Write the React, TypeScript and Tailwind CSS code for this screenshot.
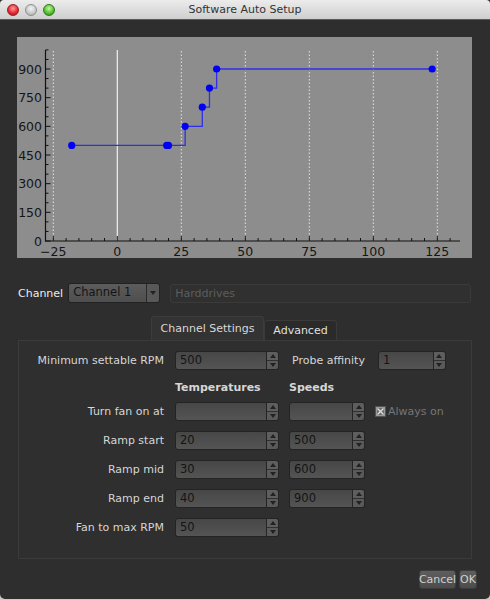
import React from "react";

const xv = (v: number) => 117.3 + 2.56 * v;
const yv = (v: number) => 241 - 0.19111 * v;

function Chart() {
  const grid = [-25, 25, 50, 75, 100, 125];
  const xTicks: number[] = [];
  for (let v = -25; v <= 130; v += 5) xTicks.push(v);
  const yTicks: number[] = [];
  for (let v = 0; v <= 1000; v += 50) yTicks.push(v);
  const pts: [number, number][] = [
    [-17.8, 500],
    [19.3, 500],
    [20, 500],
    [26.5, 600],
    [33.2, 700],
    [36, 800],
    [38.8, 900],
    [123, 900],
  ];
  const line: [number, number][] = [
    [-17.8, 500],
    [26.5, 500],
    [26.5, 600],
    [33.2, 600],
    [33.2, 700],
    [36, 700],
    [36, 800],
    [38.8, 800],
    [38.8, 900],
    [123, 900],
  ];
  return (
    <svg width={455} height={221} viewBox="17 37 455 221" className="block">
      <rect x={17} y={37} width={455} height={221} fill="#8d8d8d" />
      {grid.map((g) => (
        <line
          key={g}
          x1={xv(g)}
          x2={xv(g)}
          y1={51}
          y2={241}
          stroke="#e6e6e6"
          strokeWidth={1}
          strokeDasharray="1.5 2"
        />
      ))}
      <line x1={xv(0)} x2={xv(0)} y1={50} y2={241} stroke="#f2f2f2" strokeWidth={1.2} />
      <line x1={45.5} x2={45.5} y1={50} y2={241.5} stroke="#111" strokeWidth={1.2} />
      <line x1={45} x2={460} y1={241} y2={241} stroke="#111" strokeWidth={1.2} />
      {xTicks.map((t) => (
        <line
          key={"x" + t}
          x1={xv(t)}
          x2={xv(t)}
          y1={241}
          y2={t % 25 === 0 ? 236 : 238}
          stroke="#111"
          strokeWidth={1}
        />
      ))}
      {yTicks.map((t) => (
        <line
          key={"y" + t}
          x1={45.5}
          x2={t % 150 === 0 ? 50.5 : 48.5}
          y1={yv(t)}
          y2={yv(t)}
          stroke="#111"
          strokeWidth={1}
        />
      ))}
      {[0, 150, 300, 450, 600, 750, 900].map((t) => (
        <text
          key={"yl" + t}
          x={42}
          y={yv(t) + 4.5}
          textAnchor="end"
          fontSize={12.5}
          fill="#151515"
          fontFamily="'DejaVu Sans', sans-serif"
        >
          {t}
        </text>
      ))}
      {[-25, 0, 25, 50, 75, 100, 125].map((t) => (
        <text
          key={"xl" + t}
          x={xv(t)}
          y={255.5}
          textAnchor="middle"
          fontSize={12.5}
          fill="#151515"
          fontFamily="'DejaVu Sans', sans-serif"
        >
          {t < 0 ? "−" + Math.abs(t) : t}
        </text>
      ))}
      <polyline
        points={line.map(([a, b]) => `${xv(a)},${yv(b)}`).join(" ")}
        fill="none"
        stroke="#2f2fe6"
        strokeWidth={1.3}
      />
      {pts.map(([a, b], i) => (
        <circle key={i} cx={xv(a)} cy={yv(b)} r={3.6} fill="#0000f5" />
      ))}
    </svg>
  );
}

function Spin({ w, value }: { w: number; value?: string }) {
  return (
    <div className="flex h-[19px]" style={{ width: w }}>
      <div className="flex-1 flex items-center pl-[4px] rounded-l-[3px] border border-[#242424] bg-gradient-to-b from-[#474747] to-[#545454]">
        <span className="text-[length:11.5px] text-[color:#141414] leading-none">{value}</span>
      </div>
      <div className="w-[12px] flex flex-col rounded-r-[3px] border border-l-0 border-[#242424] overflow-hidden">
        <div className="flex-1 flex items-center justify-center bg-[#5e5e5e] border-b border-[#303030]">
          <div className="w-0 h-0 border-l-[3.5px] border-r-[3.5px] border-b-[4px] border-l-transparent border-r-transparent border-b-[#222]" />
        </div>
        <div className="flex-1 flex items-center justify-center bg-[#5a5a5a]">
          <div className="w-0 h-0 border-l-[3.5px] border-r-[3.5px] border-t-[4px] border-l-transparent border-r-transparent border-t-[#222]" />
        </div>
      </div>
    </div>
  );
}

function Label({ children }: { children: React.ReactNode }) {
  return (
    <div className="w-[145px] text-right text-[11px] text-[#d6d6d6] leading-none">{children}</div>
  );
}

function Row({
  label,
  t,
  s,
  extra,
  showS = true,
}: {
  label: string;
  t?: string;
  s?: string;
  extra?: React.ReactNode;
  showS?: boolean;
}) {
  return (
    <div className="flex items-center h-[19px]">
      <Label>{label}</Label>
      <div className="ml-[11px]">
        <Spin w={104} value={t} />
      </div>
      {showS && (
        <div className="ml-[10px]">
          <Spin w={76} value={s} />
        </div>
      )}
      {extra}
    </div>
  );
}

export default function App() {
  return (
    <div
      className="w-[490px] h-[600px] bg-[#c9c9c9] overflow-hidden"
      style={{ fontFamily: "'DejaVu Sans', 'Liberation Sans', sans-serif" }}
    >
      <div className="w-[490px] h-[599px] bg-[#2e2e2e] rounded-b-[5px] flex flex-col">
        {/* title bar */}
        <div className="relative h-[20px] bg-gradient-to-b from-[#ececec] to-[#cfcfcf] border-b border-[#5a5a5a] flex items-center justify-center rounded-t-[4px]">
          <div className="absolute left-[7px] top-[4px] flex gap-[6px]">
            <div className="w-[12px] h-[12px] rounded-full bg-[radial-gradient(circle_at_50%_35%,#ff9a9a,#e0262e_60%,#a8131a)] border border-[#9c1e22]" />
            <div className="w-[12px] h-[12px] rounded-full bg-[radial-gradient(circle_at_50%_35%,#f4f4f4,#c8c8c8_60%,#a0a0a0)] border border-[#8e8e8e]" />
            <div className="w-[12px] h-[12px] rounded-full bg-[radial-gradient(circle_at_50%_35%,#c9f5a0,#4fbf2a_60%,#2b7a14)] border border-[#2f7a1d]" />
          </div>
          <div className="text-[11px] text-[#333] leading-none">Software Auto Setup</div>
        </div>

        {/* chart */}
        <div className="ml-[17px] mt-[17px] w-[455px] h-[221px]">
          <Chart />
        </div>

        {/* channel row */}
        <div className="flex items-center ml-[18px] mt-[25px] h-[20px]">
          <div className="text-[11px] text-[#ececec] leading-none">Channel</div>
          <div className="ml-[5px] flex h-[20px] w-[92px] rounded-[3px] border border-[#222] overflow-hidden">
            <div className="flex-1 flex items-center pl-[4px] bg-gradient-to-b from-[#5c5c5c] to-[#4e4e4e]">
              <span className="text-[length:11.5px] text-[color:#141414] leading-none">Channel 1</span>
            </div>
            <div className="w-[13px] flex items-center justify-center bg-[#585858] border-l border-[#2a2a2a]">
              <div className="w-0 h-0 border-l-[3px] border-r-[3px] border-t-[4px] border-l-transparent border-r-transparent border-t-[#222]" />
            </div>
          </div>
          <div className="ml-[10px] w-[301px] h-[19px] flex items-center pl-[4px] rounded-[3px] border border-[#3a3a3a] bg-[#303030] text-[11px] text-[#5e5e5e] leading-none">
            Harddrives
          </div>
        </div>

        {/* tabs */}
        <div className="flex items-end ml-[151px] mt-[13px] h-[24px]">
          <div className="h-[24px] w-[113px] flex items-center justify-center rounded-t-[3px] border border-b-0 border-[#3c3c3c] bg-[#333333] text-[11px] text-[#d8d8d8] leading-none">
            Channel Settings
          </div>
          <div className="h-[20px] w-[73px] flex items-center justify-center rounded-t-[3px] border border-b-0 border-[#3a3a3a] bg-[#2a2a2a] text-[11px] text-[#e0e0e0] leading-none">
            Advanced
          </div>
        </div>

        {/* pane */}
        <div className="ml-[18px] w-[454px] h-[219px] border border-[#3b3b3b] bg-[#2f2f2f] flex flex-col pt-[10px]">
          <div className="flex items-center h-[19px]">
            <Label>Minimum settable RPM</Label>
            <div className="ml-[11px]">
              <Spin w={104} value="500" />
            </div>
            <div className="ml-[13px] text-[11px] text-[#d6d6d6] leading-none">Probe affinity</div>
            <div className="ml-[13px]">
              <Spin w={68} value="1" />
            </div>
          </div>
          <div className="flex items-center h-[14px] mt-[10px] text-[11px] font-bold text-[#d6d6d6] leading-none">
            <div className="ml-[156px] w-[114px]">Temperatures</div>
            <div>Speeds</div>
          </div>
          <div className="mt-[8px] flex flex-col gap-[10px]">
            <Row
              label="Turn fan on at"
              extra={
                <div className="ml-[10px] flex items-center">
                  <div className="w-[11px] h-[11px] bg-[#9a9a9a] border border-[#555] flex items-center justify-center">
                    <svg width="9" height="9" viewBox="0 0 9 9">
                      <rect x="1" y="1" width="7" height="7" fill="#6e6e6e" />
                      <path d="M1.5 1.5 L7.5 7.5 M7.5 1.5 L1.5 7.5" stroke="#e0e0e0" strokeWidth="1.3" />
                    </svg>
                  </div>
                  <div className="ml-[2px] text-[11px] text-[#767676] leading-none">Always on</div>
                </div>
              }
            />
            <Row label="Ramp start" t="20" s="500" />
            <Row label="Ramp mid" t="30" s="600" />
            <Row label="Ramp end" t="40" s="900" />
            <Row label="Fan to max RPM" t="50" showS={false} />
          </div>
        </div>

        {/* buttons */}
        <div className="flex justify-end mt-[11px] mr-[13px] gap-[3px]">
          <div className="h-[19px] w-[37px] flex items-center justify-center rounded-[3px] bg-gradient-to-b from-[#5e5e5e] to-[#4c4c4c] border border-[#3c3c3c] text-[11px] text-[#d0d0d0] leading-none">
            Cancel
          </div>
          <div className="h-[19px] w-[18px] flex items-center justify-center rounded-[3px] bg-gradient-to-b from-[#5e5e5e] to-[#4c4c4c] border border-[#3c3c3c] text-[11px] text-[#d0d0d0] leading-none">
            OK
          </div>
        </div>
      </div>
    </div>
  );
}
